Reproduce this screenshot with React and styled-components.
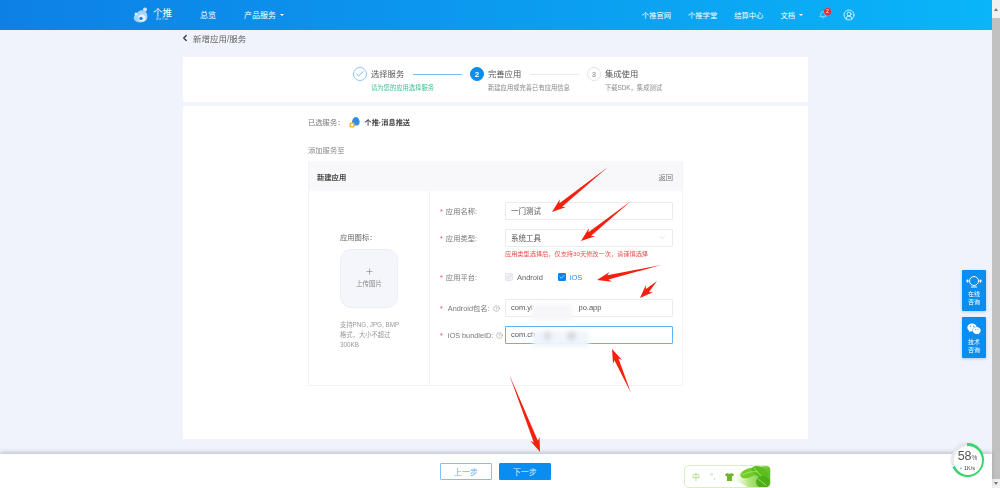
import React from "react";
import styled, { createGlobalStyle } from "styled-components";
import { Bell, Check, ChevronDown, ChevronLeft, CircleHelp, CircleUserRound, Plus } from "lucide-react";
import { FaWeixin } from "react-icons/fa";

const GlobalStyle = createGlobalStyle`
  html, body {
    margin: 0;
    height: 488px;
    overflow: hidden;
    background: #f0f3fc;
    font-family: "Liberation Sans", "Noto Sans CJK SC", sans-serif;
    color: #555;
  }
  * { box-sizing: border-box; }
`;

const Shell = styled.div`
  display: flex;
  width: 1000px;
  height: 488px;
  filter: blur(0.3px);
`;
const Page = styled.div`
  position: relative;
  flex: 1;
  display: flex;
  flex-direction: column;
  min-width: 0;
`;
const Scrollbar = styled.div`
  width: 8px;
  display: flex;
  flex-direction: column;
  align-items: center;
  background: #f1f1f1;
`;
const ScrollArrow = styled.div`
  height: ${(p) => (p.$down ? 9 : 18)}px;
  flex: none;
  display: flex;
  align-items: center;
  justify-content: center;
  &::before {
    content: "";
    border-left: 2.5px solid transparent;
    border-right: 2.5px solid transparent;
    ${(p) => (p.$down ? "border-top: 3px solid #777;" : "border-bottom: 3px solid #777;")}
  }
`;
const ScrollThumb = styled.div`
  flex: 1;
  width: 100%;
  background: #c1c1c1;
`;

const Header = styled.header`
  height: 30px;
  flex: none;
  display: flex;
  align-items: center;
  padding: 0 0 1px 133px;
  color: #fff;
  font-size: 7.3px;
  background: linear-gradient(to right, #0d80e6, #0ab5f9);
`;
const Logo = styled.div`
  width: 40px;
  display: flex;
  align-items: center;
  gap: 2px;
`;
const LogoText = styled.div`
  display: flex;
  flex-direction: column;
  align-items: center;
  font-size: 9.5px;
  line-height: 10px;
  small {
    font-size: 3px;
    line-height: 3px;
    letter-spacing: 1px;
  }
`;
const NavLeft = styled.nav`
  display: flex;
  align-items: center;
  gap: 28px;
  margin-left: 27px;
  font-size: 8px;
`;
const NavRight = styled.nav`
  display: flex;
  align-items: center;
  margin-left: auto;
  margin-right: 137px;
  gap: 17px;
`;
const NavItem = styled.span`
  display: inline-flex;
  align-items: center;
  gap: 3px;
  white-space: nowrap;
`;
const Caret = styled.i`
  border-left: 2px solid transparent;
  border-right: 2px solid transparent;
  border-top: 2.5px solid #fff;
  margin-left: 1px;
`;
const BellWrap = styled.span`
  position: relative;
  display: inline-flex;
  margin-left: -1px;
`;
const BellBadge = styled.b`
  position: absolute;
  top: -3px;
  right: -4px;
  width: 7px;
  height: 7px;
  border-radius: 50%;
  background: #f0282d;
  color: #fff;
  font-size: 5px;
  font-weight: 400;
  line-height: 7px;
  text-align: center;
`;
const UserIcon = styled.span`
  display: inline-flex;
  margin-left: -1px;
`;

const Main = styled.main`
  flex: 1;
  width: 625px;
  margin-left: 183px;
  min-height: 0;
`;
const BackRow = styled.div`
  height: 27px;
  display: flex;
  align-items: center;
  gap: 3px;
  padding-bottom: 12px;
  margin-left: -3px;
  font-size: 8.5px;
  color: #666;
  svg { color: #333; }
`;
const StepsCard = styled.section`
  height: 45px;
  background: #fff;
  display: flex;
  padding: 10px 0 0 170px;
`;
const Step = styled.div`
  display: grid;
  grid-template-columns: 14px 33px 49px;
  width: 117px;
  grid-template-rows: 14px auto;
`;
const StepCircle = styled.span`
  width: 14px;
  height: 14px;
  border-radius: 50%;
  display: flex;
  align-items: center;
  justify-content: center;
  font-size: 8px;
  font-weight: 700;
  border: 1px solid ${(p) => (p.$state === "done" ? "#8cc5f5" : p.$state === "active" ? "#0a8df0" : "#dfe1e8")};
  background: ${(p) => (p.$state === "active" ? "#0a8df0" : "#fff")};
  color: ${(p) => (p.$state === "active" ? "#fff" : p.$state === "done" ? "#2d8fe8" : "#aaa")};
`;
const StepTitle = styled.span`
  width: 33px;
  margin-left: 4px;
  font-size: 8.3px;
  line-height: 14px;
  color: #555;
  white-space: nowrap;
`;
const StepLine = styled.span`
  align-self: center;
  height: 1px;
  margin-left: 13px;
  width: 49px;
  background: ${(p) => (p.$on ? "#7cbcf2" : "#e8eaf0")};
`;
const StepSub = styled.span`
  grid-column: 2 / 4;
  margin-left: 4px;
  margin-top: 3px;
  font-size: 6.3px;
  line-height: 8px;
  white-space: nowrap;
  color: ${(p) => (p.$green ? "#3fc08f" : "#888")};
`;

const ContentCard = styled.section`
  height: 333px;
  margin-top: 4px;
  background: #fff;
  padding: 11px 125px 0;
`;
const ServiceRow = styled.div`
  display: flex;
  align-items: center;
  height: 10px;
  font-size: 7.3px;
  color: #777;
`;
const ServiceName = styled.b`
  margin-left: 4px;
  color: #444;
  font-size: 7.2px;
`;
const AddLabel = styled.div`
  margin-top: 19px;
  font-size: 7.3px;
  line-height: 10px;
  color: #888;
`;
const Panel = styled.div`
  margin-top: 5px;
  height: 225px;
  border: 1px solid #f2f3f7;
  border-top: 0;
`;
const PanelHead = styled.div`
  height: 30px;
  background: #f8f8fa;
  display: flex;
  align-items: center;
  justify-content: space-between;
  padding: 2px 9px 0 8px;
  font-size: 7.3px;
  b { color: #444; }
  span { color: #777; }
`;
const PanelBody = styled.div`
  display: flex;
  height: 194px;
`;
const IconColumn = styled.div`
  width: 121px;
  flex: none;
  padding: 42px 0 0 31px;
  border-right: 1px solid #f0f1f6;
`;
const IconLabel = styled.div`
  font-size: 7.3px;
  line-height: 10px;
  color: #666;
`;
const UploadBox = styled.div`
  width: 58px;
  height: 59px;
  margin-top: 6px;
  border-radius: 11px;
  background: #f5f6fb;
  border: 1px solid #eceef5;
  display: flex;
  flex-direction: column;
  align-items: center;
  padding-top: 17px;
  font-size: 6.5px;
  line-height: 9px;
  color: #888;
  svg { color: #777; margin-bottom: 3px; }
`;
const UploadHint = styled.div`
  width: 62px;
  margin-top: 12px;
  font-size: 6.3px;
  line-height: 10px;
  color: #999;
`;
const FormColumn = styled.div`
  flex: 1;
  padding: 11px 10px 0 10px;
`;
const Row = styled.div`
  display: flex;
  align-items: center;
  height: ${(p) => p.$h || 18}px;
  margin-bottom: ${(p) => p.$mb ?? 9}px;
`;
const Label = styled.label`
  width: 65px;
  flex: none;
  display: flex;
  align-items: center;
  gap: 2px;
  font-size: 7.3px;
  color: #777;
  white-space: nowrap;
  em { color: #f0504f; font-style: normal; margin-right: 1px; }
  svg { color: #888; margin-left: 1px; }
`;
const Field = styled.div`
  position: relative;
  width: 168px;
  height: 18px;
  display: flex;
  align-items: center;
  justify-content: space-between;
  padding: 0 5px 1px;
  font-size: 7.5px;
  color: #555;
  border: 1px solid ${(p) => (p.$focus ? "#5db5f5" : "#e9ebf1")};
  border-radius: 1px;
  svg { color: #bbb; }
`;
const Smudge = styled.i`
  position: absolute;
  top: ${(p) => p.$top ?? 2}px;
  left: ${(p) => p.$left}px;
  width: ${(p) => p.$w}px;
  height: ${(p) => p.$high || 16}px;
  background: ${(p) => p.$bg || "#fff"};
  filter: blur(2px);
`;
const ErrorText = styled.div`
  margin: -7px 0 0 65px;
  height: 22px;
  font-size: 6.2px;
  line-height: 10px;
  color: #ef4a4a;
`;
const Box = styled.span`
  width: 8px;
  height: 8px;
  display: inline-flex;
  align-items: center;
  justify-content: center;
  border-radius: 1px;
  color: ${(p) => (p.$on ? "#fff" : "#c5c9d6")};
  background: ${(p) => (p.$on ? "#0a84e8" : "#eff0f5")};
  border: 1px solid ${(p) => (p.$on ? "#0a84e8" : "#e4e6ee")};
`;
const Platform = styled.span`
  display: inline-flex;
  align-items: center;
  gap: 4px;
  margin-right: 15px;
  font-size: 7.5px;
  color: ${(p) => (p.$on ? "#2d8fe8" : "#666")};
`;

const Footer = styled.footer`
  position: relative;
  height: 34px;
  flex: none;
  background: #fff;
  box-shadow: 0 -2px 4px rgba(90, 95, 120, 0.3);
  display: flex;
  align-items: flex-start;
  gap: 7px;
  padding: 9px 0 0 440px;
`;
const Button = styled.button`
  width: 52px;
  height: 17px;
  padding: 0;
  font: inherit;
  font-size: 8px;
  border-radius: 1px;
  border: 1px solid ${(p) => (p.$primary ? "#0a8df0" : "#7dc1f8")};
  background: ${(p) => (p.$primary ? "#0a8df0" : "#fff")};
  color: ${(p) => (p.$primary ? "#dff0ff" : "#5aa9ee")};
`;
const ImeBar = styled.div`
  position: absolute;
  left: 684px;
  top: 11px;
  width: 87px;
  height: 23px;
  display: flex;
  align-items: center;
  gap: 10px;
  padding-left: 7px;
  border: 1px solid #d8eec4;
  border-radius: 5px;
  font-size: 8px;
  color: #9bcf6a;
  background: #fff;
  overflow: hidden;
`;
const ImeIcon = styled.span`
  display: inline-flex;
  color: #6fb52c;
`;
const ImeLeaves = styled.svg`
  position: absolute;
  right: 0;
  top: 0;
`;

const FloatStack = styled.div`
  position: absolute;
  right: 6px;
  top: 270px;
  display: flex;
  flex-direction: column;
  gap: 6px;
`;
const FloatButton = styled.div`
  width: 24px;
  height: 41px;
  background: #0a8df0;
  border-radius: 1px;
  box-shadow: 0 1px 3px rgba(10, 141, 240, 0.35);
  color: #fff;
  display: flex;
  flex-direction: column;
  align-items: center;
  padding-top: 5px;
  font-size: 6px;
  line-height: 7.5px;
  text-align: center;
  svg { margin-bottom: 3px; }
`;

const SpeedBall = styled.div`
  position: absolute;
  left: 951px;
  top: 443px;
  width: 33px;
  height: 34px;
  border-radius: 50%;
  background: conic-gradient(#35d46f 0 68%, #e6e8ec 68% 100%);
  display: flex;
  align-items: center;
  justify-content: center;
  box-shadow: 0 0 2px rgba(0, 0, 0, 0.15);
`;
const SpeedInner = styled.div`
  width: 28px;
  height: 29px;
  border-radius: 50%;
  background: #fff;
  display: flex;
  flex-direction: column;
  align-items: center;
  padding-top: 3px;
  font-size: 12.5px;
  line-height: 14px;
  color: #555;
  small { font-size: 6.5px; }
`;
const SpeedRate = styled.span`
  font-size: 5.5px;
  line-height: 7px;
  color: #444;
  &::before { content: "•"; color: #3aa0f5; margin-right: 2px; }
`;

const ArrowLayer = styled.svg`
  position: absolute;
  left: 0;
  top: 0;
  pointer-events: none;
`;

// tail -> head, barbed red marker arrows drawn over the shot
const arrows = [
  [608, 167, 552, 212],
  [631, 201, 581, 241],
  [661, 265, 597, 280],
  [657, 281, 640, 298],
  [631, 393, 612, 349],
  [509, 374, 540, 452],
];
const arrowPoints = ([x1, y1, x2, y2]) => {
  const len = Math.hypot(x2 - x1, y2 - y1);
  const ux = (x2 - x1) / len;
  const uy = (y2 - y1) / len;
  const at = (along, side) => `${(x2 - ux * along - uy * side).toFixed(1)},${(y2 - uy * along + ux * side).toFixed(1)}`;
  const head = Math.min(14, len * 0.55);
  return [at(len, 0), at(head * 0.8, 2.2), at(head, 5), at(0, 0), at(head, -5), at(head * 0.8, -2.2)].join(" ");
};

const GetuiLogo = () => (
  <svg width="18" height="18" viewBox="0 0 18 18">
    <circle cx="12" cy="3.5" r="2" fill="#cfe8ff" />
    <path d="M5 6c3-3 8-2 9 2s0 7-4 8-8 0-9-3 2-5 4-7z" fill="#a9d4fb" />
    <circle cx="9" cy="12" r="3.6" fill="#e8f5ff" />
    <circle cx="8" cy="12.4" r="1.7" fill="#0d80e6" />
    <circle cx="3" cy="8" r="1.5" fill="#d8eeff" />
  </svg>
);

const ServiceIcon = () => (
  <svg width="11" height="12" viewBox="0 0 11 12" style={{ marginLeft: 5 }}>
    <path d="M3 6c0-3 2-5 4-5s4 3 3.500 6-4 3-7.500 2z" fill="#2f8fe6" />
    <rect x="0.500" y="6.500" width="5" height="5" rx="1" fill="#f6b73c" />
    <rect x="2" y="8" width="2" height="2" fill="#fff" />
  </svg>
);

const HeadsetIcon = () => (
  <svg width="16" height="13" viewBox="0 0 16 13" fill="none" stroke="#fff">
    <circle cx="8" cy="6" r="4.500" strokeWidth="1" />
    <rect x="0.500" y="4.500" width="2" height="3" rx="1" fill="#fff" strokeWidth="0" />
    <rect x="13.500" y="4.500" width="2" height="3" rx="1" fill="#fff" strokeWidth="0" />
    <path d="M5 12h6" strokeWidth="1" />
  </svg>
);

const ShirtGlyph = () => (
  <svg width="9" height="8" viewBox="0 0 9 8" fill="currentColor">
    <path d="M2.500 0L0 1.500 1 3.500l1-.5V8h5V3l1 .5 1-2L6.500 0 4.500 1z" />
  </svg>
);

const App = () => {
  return (
    <>
      <GlobalStyle />
      <Shell>
        <Page>
          <Header>
            <Logo>
              <GetuiLogo />
              <LogoText>
                个推
                <small>GeTui</small>
              </LogoText>
            </Logo>
            <NavLeft>
              <NavItem>总览</NavItem>
              <NavItem>
                产品服务 <Caret />
              </NavItem>
            </NavLeft>
            <NavRight>
              <NavItem>个推官网</NavItem>
              <NavItem>个推学堂</NavItem>
              <NavItem>结算中心</NavItem>
              <NavItem>
                文档 <Caret />
              </NavItem>
              <BellWrap>
                <Bell size={8} strokeWidth={1.5} />
                <BellBadge>2</BellBadge>
              </BellWrap>
              <UserIcon>
                <CircleUserRound size={12} strokeWidth={1.5} />
              </UserIcon>
            </NavRight>
          </Header>

          <Main>
            <BackRow>
              <ChevronLeft size={10} strokeWidth={3} />
              新增应用/服务
            </BackRow>

            <StepsCard>
              <Step>
                <StepCircle $state="done">
                  <Check size={10} strokeWidth={1.5} />
                </StepCircle>
                <StepTitle>选择服务</StepTitle>
                <StepLine $on />
                <StepSub $green>请为您的应用选择服务</StepSub>
              </Step>
              <Step>
                <StepCircle $state="active">2</StepCircle>
                <StepTitle>完善应用</StepTitle>
                <StepLine />
                <StepSub>新建应用或完善已有应用信息</StepSub>
              </Step>
              <Step>
                <StepCircle>3</StepCircle>
                <StepTitle>集成使用</StepTitle>
                <StepSub>下载SDK，集成测试</StepSub>
              </Step>
            </StepsCard>

            <ContentCard>
              <ServiceRow>
                已选服务：
                <ServiceIcon />
                <ServiceName>个推·消息推送</ServiceName>
              </ServiceRow>
              <AddLabel>添加服务至</AddLabel>
              <Panel>
                <PanelHead>
                  <b>新建应用</b>
                  <span>返回</span>
                </PanelHead>
                <PanelBody>
                  <IconColumn>
                    <IconLabel>应用图标：</IconLabel>
                    <UploadBox>
                      <Plus size={9} strokeWidth={1.5} />
                      上传图片
                    </UploadBox>
                    <UploadHint>支持PNG, JPG, BMP格式，大小不超过300KB</UploadHint>
                  </IconColumn>
                  <FormColumn>
                    <Row>
                      <Label>
                        <em>*</em>应用名称:
                      </Label>
                      <Field>一门测试</Field>
                    </Row>
                    <Row>
                      <Label>
                        <em>*</em>应用类型:
                      </Label>
                      <Field>
                        系统工具
                        <ChevronDown size={9} strokeWidth={1.2} />
                      </Field>
                    </Row>
                    <ErrorText>应用类型选择后，仅支持30天修改一次，请谨慎选择</ErrorText>
                    <Row $h={12} $mb={16}>
                      <Label>
                        <em>*</em>应用平台:
                      </Label>
                      <Platform>
                        <Box>
                          <Check size={6} strokeWidth={2} />
                        </Box>
                        Android
                      </Platform>
                      <Platform $on>
                        <Box $on>
                          <Check size={6} strokeWidth={2.5} />
                        </Box>
                        iOS
                      </Platform>
                    </Row>
                    <Row>
                      <Label>
                        <em>*</em>&nbsp;Android包名:
                        <CircleHelp size={7} strokeWidth={1.5} />
                      </Label>
                      <Field>
                        com.yi&nbsp;&nbsp;&nbsp;&nbsp;&nbsp;&nbsp;&nbsp;&nbsp;&nbsp;&nbsp;&nbsp;&nbsp;&nbsp;&nbsp;&nbsp;&nbsp;&nbsp;&nbsp;&nbsp;&nbsp;&nbsp;&nbsp;po.app
                        <Smudge $left={26} $w={40} $bg="#f6f6f8" $top={4} />
                      </Field>
                    </Row>
                    <Row>
                      <Label>
                        <em>*</em>&nbsp;iOS bundleID:
                        <CircleHelp size={7} strokeWidth={1.5} />
                      </Label>
                      <Field $focus>
                        com.ch
                        <Smudge $left={27} $w={56} $top={4} $bg="#f0f5fb" />
                        <Smudge $left={38} $w={7} $top={5} $high={8} $bg="#dcdcdf" />
                        <Smudge $left={62} $w={7} $top={5} $high={8} $bg="#d6d6da" />
                      </Field>
                    </Row>
                  </FormColumn>
                </PanelBody>
              </Panel>
            </ContentCard>
          </Main>

          <Footer>
            <Button>上一步</Button>
            <Button $primary>下一步</Button>
            <ImeBar>
              中<span>°,</span>
              <ImeIcon>
                <ShirtGlyph />
              </ImeIcon>
              <ImeLeaves width="40" height="23" viewBox="0 0 40 23">
                <defs>
                  <linearGradient id="leafFade" x1="0" y1="0" x2="1" y2="0">
                    <stop offset="0" stopColor="#fff" stopOpacity="0" />
                    <stop offset="0.45" stopColor="#b6e784" />
                    <stop offset="1" stopColor="#62c020" />
                  </linearGradient>
                </defs>
                <path d="M0 14C8 5 20 0 40 0v23H22C15 20 8 15 0 14z" fill="url(#leafFade)" />
                <ellipse cx="19" cy="7" rx="9" ry="4.500" fill="#72cc28" transform="rotate(-20 19 7)" />
                <ellipse cx="30" cy="6" rx="9" ry="5" fill="#5cbd1e" transform="rotate(25 30 6)" />
                <ellipse cx="33" cy="16" rx="7" ry="6" fill="#4cae18" />
                <path d="M12 9c6-3 11-4 16-3M24 2l7 8M28 13l8 6" stroke="#c2ee8a" strokeWidth="0.7" fill="none" />
              </ImeLeaves>
            </ImeBar>
          </Footer>

          <FloatStack>
            <FloatButton>
              <HeadsetIcon />
              在线
              <br />
              咨询
            </FloatButton>
            <FloatButton>
              <FaWeixin size={14} />
              技术
              <br />
              咨询
            </FloatButton>
          </FloatStack>

          <ArrowLayer width="992" height="488" viewBox="0 0 992 488">
            {arrows.map((a) => (
              <polygon key={a.join()} points={arrowPoints(a)} fill="#f4210f" />
            ))}
          </ArrowLayer>

          <SpeedBall>
            <SpeedInner>
              <span>
                58<small>%</small>
              </span>
              <SpeedRate>1K/s</SpeedRate>
            </SpeedInner>
          </SpeedBall>
        </Page>
        <Scrollbar>
          <ScrollArrow />
          <ScrollThumb />
          <ScrollArrow $down />
        </Scrollbar>
      </Shell>
    </>
  );
};

export default App;
